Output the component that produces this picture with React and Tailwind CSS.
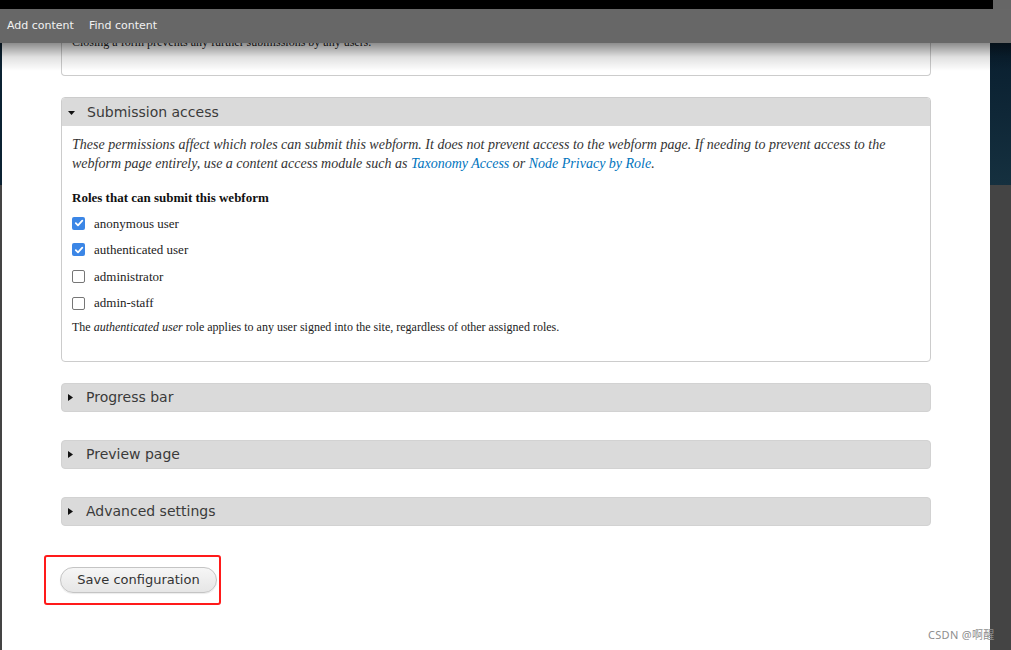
import React from "react";

const sans = { fontFamily: '"DejaVu Sans", Verdana, sans-serif' };
const serif = { fontFamily: '"Liberation Serif", "Times New Roman", serif' };

function Check({ checked }) {
  if (checked) {
    return (
      <span className="w-[13px] h-[13px] rounded-[2px] bg-[#3b86e6] flex items-center justify-center shrink-0">
        <svg width="10" height="10" viewBox="0 0 10 10">
          <polyline points="1.8,5.2 4,7.3 8.3,2.6" fill="none" stroke="#fff" strokeWidth="1.8" strokeLinecap="round" strokeLinejoin="round" />
        </svg>
      </span>
    );
  }
  return <span className="w-[13px] h-[13px] rounded-[2px] border-[1.5px] border-[#767676] bg-white shrink-0" />;
}

function Collapsed({ title }) {
  return (
    <div className="h-[29px] border border-[#d2d2d2] rounded-[4px] bg-[#dadada] flex items-center pl-[6px]">
      <svg width="5" height="7" viewBox="0 0 5 7" className="shrink-0">
        <polygon points="0,0 5,3.5 0,7" fill="#111" />
      </svg>
      <span className="ml-[13px] text-[14px] text-[#3a3a3a]" style={sans}>{title}</span>
    </div>
  );
}

export default function App() {
  const roles = [
    ["anonymous user", true],
    ["authenticated user", true],
    ["administrator", false],
    ["admin-staff", false],
  ];
  return (
    <div className="relative w-[1011px] h-[650px] overflow-hidden flex bg-white">
      <div className="w-[2px] flex flex-col shrink-0">
        <div className="h-[185px] bg-[#0b2233]" />
        <div className="flex-1 bg-[#444]" />
      </div>

      <main className="flex-1 px-[59px] flex flex-col">
        <div className="h-[76px] border border-t-0 border-[#ccc] rounded-b-[4px] flex items-end pb-[25px] pl-[10px]">
          <p className="text-[12px] leading-[16px] text-[#222]" style={serif}>
            Closing a form prevents any further submissions by any users.
          </p>
        </div>

        <div className="mt-[21px] border border-[#ccc] rounded-[4px] overflow-hidden">
          <div className="h-[28px] bg-[#dadada] flex items-center pl-[6px]">
            <svg width="7" height="5" viewBox="0 0 7 5" className="shrink-0 mt-[3px]">
              <polygon points="0,0 7,0 3.5,4" fill="#111" />
            </svg>
            <span className="ml-[12px] text-[14px] text-[#3a3a3a]" style={sans}>Submission access</span>
          </div>
          <div className="pl-[10px] pr-[10px] pt-[9px] pb-[26px]" style={serif}>
            <p className="italic text-[14px] leading-[19px] text-[#333]">
              These permissions affect which roles can submit this webform. It does not prevent access to the webform page. If needing to prevent access to the webform page entirely, use a content access module such as{" "}
              <a className="text-[#0074bd]">Taxonomy Access</a> or <a className="text-[#0074bd]">Node Privacy by Role</a>.
            </p>
            <div className="mt-[17px] text-[13px] leading-[16px] font-bold text-[#111]">
              Roles that can submit this webform
            </div>
            <div className="mt-[4px] flex flex-col">
              {roles.map(([label, checked]) => (
                <div key={label} className="h-[26.6px] flex items-center gap-[9px]">
                  <Check checked={checked} />
                  <span className="text-[13px] text-[#222]">{label}</span>
                </div>
              ))}
            </div>
            <p className="mt-[3px] text-[12px] leading-[16px] text-[#222]">
              The <em>authenticated user</em> role applies to any user signed into the site, regardless of other assigned roles.
            </p>
          </div>
        </div>

        <div className="mt-[21px] flex flex-col gap-[28px]">
          <Collapsed title="Progress bar" />
          <Collapsed title="Preview page" />
          <Collapsed title="Advanced settings" />
        </div>

        <div className="mt-[40px] ml-[-1px]">
          <span className="relative inline-block">
            <button className="h-[26px] w-[157px] rounded-full border border-[#c4c4c4] bg-linear-to-b from-[#f6f6f6] to-[#e6e6e6] text-[13px] text-[#333] shadow-[0_1px_1px_rgba(0,0,0,0.08)]" style={sans}>
              Save configuration
            </button>
            <span className="absolute left-[-16px] top-[-11px] w-[177px] h-[50px] border-2 border-[#ff1a1a] rounded-[3px] pointer-events-none" />
          </span>
        </div>
      </main>

      <div className="w-[21px] flex flex-col shrink-0">
        <div className="h-[185px] bg-linear-to-b from-[#06192a] to-[#15303f]" />
        <div className="flex-1 bg-[#444]" />
      </div>

      {/* top toolbar overlay */}
      <div className="absolute left-0 top-0 w-full">
        <div className="h-[9px] flex">
          <div className="flex-1 bg-black" />
          <div className="w-[18px] bg-[#666]" />
        </div>
        <div className="h-[34px] bg-[#676767] flex items-center pl-[7px] gap-[15px] text-[11px] text-[#f2f2f2]" style={sans}>
          <span>Add content</span>
          <span>Find content</span>
        </div>
        <div className="h-[28px] bg-linear-to-b from-[rgba(0,0,0,0.45)] via-[rgba(0,0,0,0.12)] to-transparent" />
      </div>

      <div className="absolute left-[928px] top-[627px] text-[11px] leading-[16px] tracking-[0.3px] text-[#8e8e8e]" style={{ fontFamily: '"Noto Sans", "Noto Sans CJK SC", sans-serif' }}>
        CSDN @啊醒
      </div>
    </div>
  );
}
